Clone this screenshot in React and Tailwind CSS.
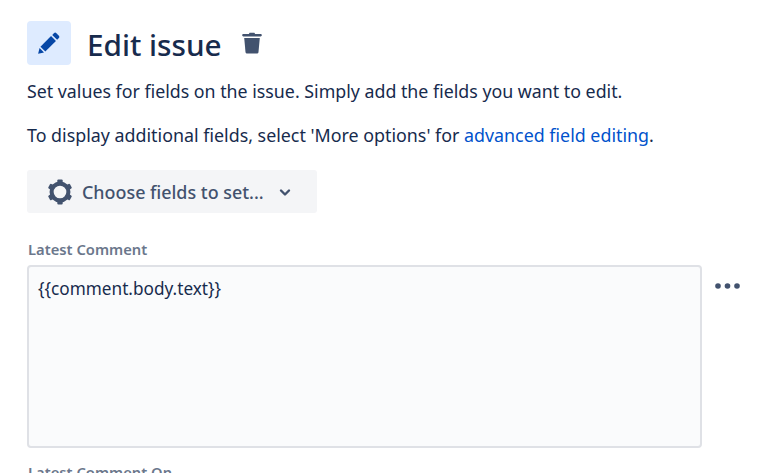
// Edit issue action config panel
function PencilIcon() {
  return (
    <svg width="26" height="26" viewBox="0 0 24 24" fill="#0747a6">
      <path d="M16.6 2.9a1.6 1.6 0 0 1 2.2 0l2.3 2.3a1.6 1.6 0 0 1 0 2.2l-1.6 1.6-4.5-4.5z" />
      <path d="M13.9 5.6l4.5 4.5L8.6 19.900l-4.500-4.500z" />
      <path d="M3.300 16.600l4.100 4.100-5.400 1.300z" />
    </svg>
  );
}

function TrashIcon() {
  return (
    <svg width="24" height="24" viewBox="0 0 24 24" fill="#42526e">
      <path d="M9.6 1.800h4.800l.7 1.300h5.500c.7 0 1.200.5 1.200 1.100s-.5 1.200-1.200 1.200h-17.200C2.700 5.400 2.200 4.900 2.200 4.200s.5-1.100 1.200-1.100h5.500z" />
      <path d="M4.200 7h15.600l-1.300 13.900c-.1 1-.9 1.700-1.800 1.700H7.300c-.9 0-1.700-.7-1.800-1.700z" />
    </svg>
  );
}

function GearIcon() {
  return (
    <svg width="26" height="28" viewBox="0 0 24 26" fill="none">
      <circle cx="12" cy="13" r="7.800" stroke="#42526e" strokeWidth="3.800" />
      <g fill="#42526e">
        <rect x="9.500" y="1.400" width="5" height="3.500" rx="1" />
        <rect x="9.500" y="21.100" width="5" height="3.500" rx="1" />
        <rect x="9.500" y="1.400" width="5" height="3.500" rx="1" transform="rotate(60 12 13)" />
        <rect x="9.500" y="1.400" width="5" height="3.500" rx="1" transform="rotate(120 12 13)" />
        <rect x="9.500" y="1.400" width="5" height="3.500" rx="1" transform="rotate(240 12 13)" />
        <rect x="9.500" y="1.400" width="5" height="3.500" rx="1" transform="rotate(300 12 13)" />
      </g>
    </svg>
  );
}

function ChevronIcon() {
  return (
    <svg width="24" height="24" viewBox="0 0 24 24" fill="none">
      <path d="M8 10.500l4 4 4-4" stroke="#42526e" strokeWidth="2.400" strokeLinecap="round" strokeLinejoin="round" />
    </svg>
  );
}

function MoreIcon() {
  return (
    <svg width="26" height="10" viewBox="0 0 26 10" fill="#42526e">
      <circle cx="3" cy="5" r="2.800" />
      <circle cx="12.500" cy="5" r="2.800" />
      <circle cx="22" cy="5" r="2.800" />
    </svg>
  );
}

export default function App() {
  return (
    <div className="h-[473px] w-[783px] overflow-hidden bg-white pl-[27px] pt-[21px] font-['Noto_Sans',sans-serif] text-[#172b4d]">
      {/* Header */}
      <div className="flex h-[46px] items-start">
        <span className="flex h-11 w-11 items-center justify-center rounded-[4px] bg-[#deebff]">
          <PencilIcon />
        </span>
        <h1 className="ml-[16px] text-[29.700px] leading-[47px] font-medium">Edit issue</h1>
        <span className="ml-[18px] mt-[10px] flex">
          <TrashIcon />
        </span>
      </div>

      {/* Description */}
      <p className="mt-[12px] text-[17.800px] leading-6">
        Set values for fields on the issue. Simply add the fields you want to edit.
      </p>
      <p className="mt-[20px] text-[17.850px] leading-6">
        To display additional fields, select 'More options' for{' '}
        <a href="#" className="text-[#0052cc]">advanced field editing</a>.
      </p>

      {/* Field picker */}
      <button
        type="button"
        className="mt-[23px] flex h-[43px] w-[290px] items-center rounded-[3px] bg-[#f4f5f7] pl-[20px] text-[#42526e]"
      >
        <GearIcon />
        <span className="ml-[9px] pt-px text-[17.900px] font-medium">Choose fields to set...</span>
        <span className="ml-[9px] flex">
          <ChevronIcon />
        </span>
      </button>

      {/* Latest Comment */}
      <label className="mt-[26px] block pl-px text-[14.750px] leading-[20px] font-semibold text-[#6b778c]">Latest Comment</label>
      <div className="mt-[6px] flex items-start">
        <div className="h-[183px] w-[675px] rounded-[4px] border-2 border-[#dfe1e6] bg-[#fafbfc] px-[9px] pt-[10px] text-[17.200px] leading-6">
          {'{{comment.body.text}}'}
        </div>
        <span className="ml-[13px] mt-[16px] flex">
          <MoreIcon />
        </span>
      </div>

      <label className="mt-[14px] block pl-px text-[14.750px] leading-[20px] font-semibold text-[#6b778c]">Latest Comment On</label>
    </div>
  );
}
